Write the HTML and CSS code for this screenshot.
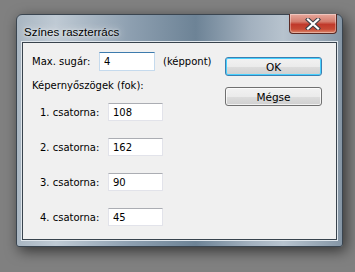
FILE: index.html
```html
<!DOCTYPE html>
<html lang="hu">
<head>
    <meta charset="UTF-8">
    <title>Színes raszterrács</title>
    <link rel="stylesheet" href="styles.css">
</head>
<body>
    <div class="window">
        <div class="titlebar">
            <span class="title">Színes raszterrács</span>
            <button class="close-btn">
                <svg width="18" height="12" viewBox="0 0 18 12">
                    <path d="M4 1.5 L14 10.5 M14 1.5 L4 10.5" stroke="#3b3f47" stroke-width="4.2" stroke-linecap="square"/>
                    <path d="M4 1.5 L14 10.5 M14 1.5 L4 10.5" stroke="#fff" stroke-width="2.2" stroke-linecap="square"/>
                </svg>
            </button>
        </div>

        <div class="client">
            <div class="form">
                <div class="row row-max">
                    <label class="lbl-max">Max. sugár:</label>
                    <input class="field field-focus" type="text" value="4">
                    <span class="unit">(képpont)</span>
                </div>
                <div class="section-title">Képernyőszögek (fok):</div>
                <div class="row row-ch">
                    <label class="lbl-ch">1. csatorna:</label>
                    <input class="field" type="text" value="108">
                </div>
                <div class="row row-ch">
                    <label class="lbl-ch">2. csatorna:</label>
                    <input class="field" type="text" value="162">
                </div>
                <div class="row row-ch">
                    <label class="lbl-ch">3. csatorna:</label>
                    <input class="field" type="text" value="90">
                </div>
                <div class="row row-ch">
                    <label class="lbl-ch">4. csatorna:</label>
                    <input class="field" type="text" value="45">
                </div>
            </div>

            <div class="buttons">
                <button class="btn btn-default">OK</button>
                <button class="btn">Mégse</button>
            </div>
        </div>
    </div>
</body>
</html>
```

FILE: styles.css
```css
body {
    margin: 0;
    width: 355px;
    height: 272px;
    overflow: hidden;
    background: #808080;
    font-family: 'DejaVu Sans', sans-serif;
    font-size: 10px;
    color: #000;
}

.window {
    margin: 14px 0 0 16px;
    width: 327px;
    height: 233px;
    box-sizing: border-box;
    border: 1px solid #3a4550;
    border-radius: 6px 6px 3px 3px;
    background: linear-gradient(to right, #a9b6c2 0%, #bfcad4 12%, #8d9fb0 35%, #6d8396 55%, #a3b1bf 72%, #b7c3ce 82%, #8596a6 100%);
    box-shadow: 3px 4px 14px rgba(0, 0, 0, 0.6);
    padding: 0 5px 6px 5px;
    display: flex;
    flex-direction: column;
}

.titlebar {
    height: 27px;
    display: flex;
    align-items: flex-start;
    justify-content: space-between;
}

.title {
    font-family: 'Liberation Sans', sans-serif;
    font-size: 11.5px;
    color: #000;
    margin: 11px 0 0 2px;
    text-shadow: 0 0 8px rgba(255, 255, 255, 0.9), 0 0 3px rgba(255, 255, 255, 0.8);
}

.close-btn {
    margin: -1px 0 0 0;
    width: 48px;
    height: 20px;
    border: 1px solid #5a2a24;
    border-top: none;
    border-radius: 0 0 4px 4px;
    background: linear-gradient(to bottom, #e8a99d 0%, #d47d6e 40%, #c0392b 55%, #c74a35 80%, #dd8a6e 100%);
    padding: 0;
    display: flex;
    align-items: center;
    justify-content: center;
    box-shadow: inset 0 0 0 1px rgba(255, 255, 255, 0.35);
}

.client {
    flex: 1;
    background: #f0f0f0;
    border: 1px solid #38434d;
    box-shadow: 0 0 0 1px #dfe6ec;
    display: flex;
    justify-content: space-between;
    padding: 9px 14px 0 9px;
}

.row {
    display: flex;
    align-items: center;
}

.row-max {
    height: 19px;
}

.lbl-max {
    width: 67px;
}

.unit {
    margin-left: 8px;
}

.section-title {
    margin-top: 9px;
    height: 12px;
    line-height: 12px;
}

.row-ch {
    height: 18px;
    margin-top: 17px;
    padding-left: 8px;
}

.section-title + .row-ch {
    margin-top: 11px;
}

.lbl-ch {
    width: 68px;
}

.field {
    width: 55px;
    height: 18px;
    box-sizing: border-box;
    border: 1px solid #e2e3ea;
    border-top-color: #abadb3;
    background: #fff;
    font-family: 'DejaVu Sans', sans-serif;
    font-size: 10px;
    padding: 0 0 0 4px;
    margin: 0;
    color: #000;
}

.field-focus {
    width: 56px;
    height: 19px;
    border-color: #c5daed;
    border-top-color: #3d7bad;
}

.buttons {
    display: flex;
    flex-direction: column;
    gap: 11px;
    padding-top: 5px;
}

.btn {
    width: 97px;
    height: 19px;
    border: 1px solid #707070;
    border-radius: 3px;
    background: linear-gradient(to bottom, #f2f2f2 0%, #ebebeb 50%, #dddddd 51%, #cfcfcf 100%);
    font-family: 'DejaVu Sans', sans-serif;
    font-size: 10.5px;
    font-weight: normal;
    color: #000;
    padding: 0;
    box-shadow: inset 0 0 0 1px rgba(255, 255, 255, 0.7);
}

.btn-default {
    border-color: #3c7fb1;
    box-shadow: inset 0 0 0 1px #48d1ff;
}
```
